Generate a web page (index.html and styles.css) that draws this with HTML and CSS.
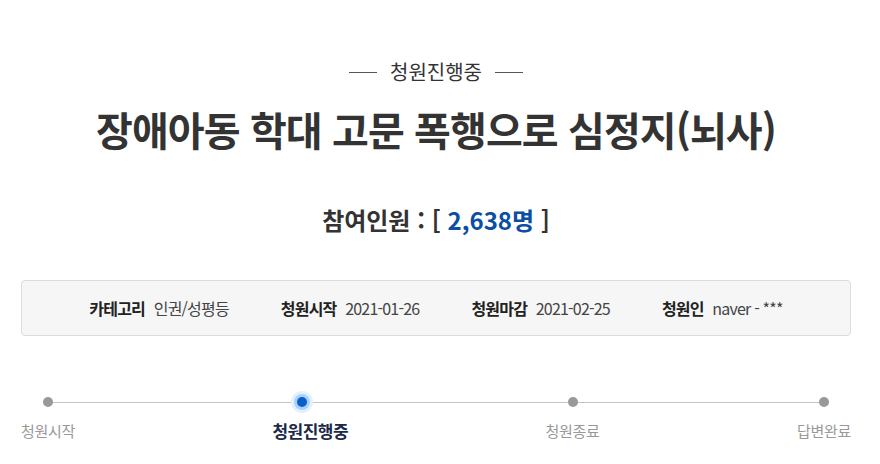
FILE: index.html
```html
<!DOCTYPE html>
<html lang="ko">
<head>
  <meta charset="UTF-8">
  <title>청원 상세</title>
  <link rel="stylesheet" href="styles.css">
</head>
<body>
  <div class="petition">
    <div class="status"><span class="status-text">청원진행중</span></div>
    <h1 class="title">장애아동 학대 고문 폭행으로 심정지(뇌사)</h1>
    <p class="count">참여인원 : [ <span class="count-num">2,638명</span> ]</p>

    <ul class="info">
      <li><b>카테고리</b> 인권/성평등</li>
      <li><b>청원시작</b> 2021-01-26</li>
      <li><b>청원마감</b> 2021-02-25</li>
      <li><b>청원인</b> naver - ***</li>
    </ul>

    <ol class="steps">
      <li class="step"><span class="dot"></span>청원시작</li>
      <li class="step active"><span class="dot"></span>청원진행중</li>
      <li class="step"><span class="dot"></span>청원종료</li>
      <li class="step"><span class="dot"></span>답변완료</li>
    </ol>
  </div>
</body>
</html>
```

FILE: styles.css
```css
body {
  margin: 0;
  font-family: "Noto Sans CJK KR", "Noto Sans", sans-serif;
  color: #333;
  background: #fff;
}
.petition {
  width: 830px;
  padding: 58px 0 0 21px;
}
.status {
  display: flex;
  justify-content: center;
  align-items: center;
  gap: 13px;
  font-size: 20px;
  line-height: 28px;
  color: #333;
}
.status::before,
.status::after {
  content: "";
  width: 28px;
  border-top: 1px solid #555;
}
.title {
  margin: 15px 0 0 0;
  text-align: center;
  font-size: 40px;
  line-height: 56px;
  font-weight: 700;
  letter-spacing: -0.9px;
}
.count {
  margin: 45px 0 0 0;
  text-align: center;
  font-size: 24px;
  line-height: 36px;
  font-weight: 700;
}
.count-num {
  color: #0b4ea2;
}
.info {
  list-style: none;
  margin: 42px 0 0 0;
  padding: 0;
  height: 54px;
  display: flex;
  justify-content: center;
  align-items: center;
  gap: 52px;
  background: #f6f6f6;
  border: 1px solid #dcdcdc;
  border-radius: 4px;
  font-size: 16px;
  letter-spacing: -0.8px;
  color: #444;
}
.info b {
  color: #222;
  margin-right: 5px;
}
.steps {
  position: relative;
  list-style: none;
  margin: 56px 0 0 0;
  padding: 0;
  display: flex;
  justify-content: space-between;
}
.steps::before {
  content: "";
  position: absolute;
  left: 26px;
  right: 28px;
  top: 10px;
  border-top: 1px solid #c4c4c4;
}
.step {
  position: relative;
  display: flex;
  flex-direction: column;
  align-items: center;
  gap: 13px;
  font-size: 15px;
  line-height: 22px;
  color: #999;
  letter-spacing: -0.3px;
}
.dot {
  width: 10px;
  height: 10px;
  margin: 5px 0 0 0;
  border-radius: 50%;
  background: #999;
}
.step.active {
  color: #1b2a48;
  font-size: 17px;
  font-weight: 700;
  letter-spacing: -0.5px;
}
.step.active .dot {
  transform: translateX(-8px);
  background: #0a5ec8;
  box-shadow: 0 0 0 3px #a9d2fb, 0 0 0 6px #e3f0fd;
}
```
